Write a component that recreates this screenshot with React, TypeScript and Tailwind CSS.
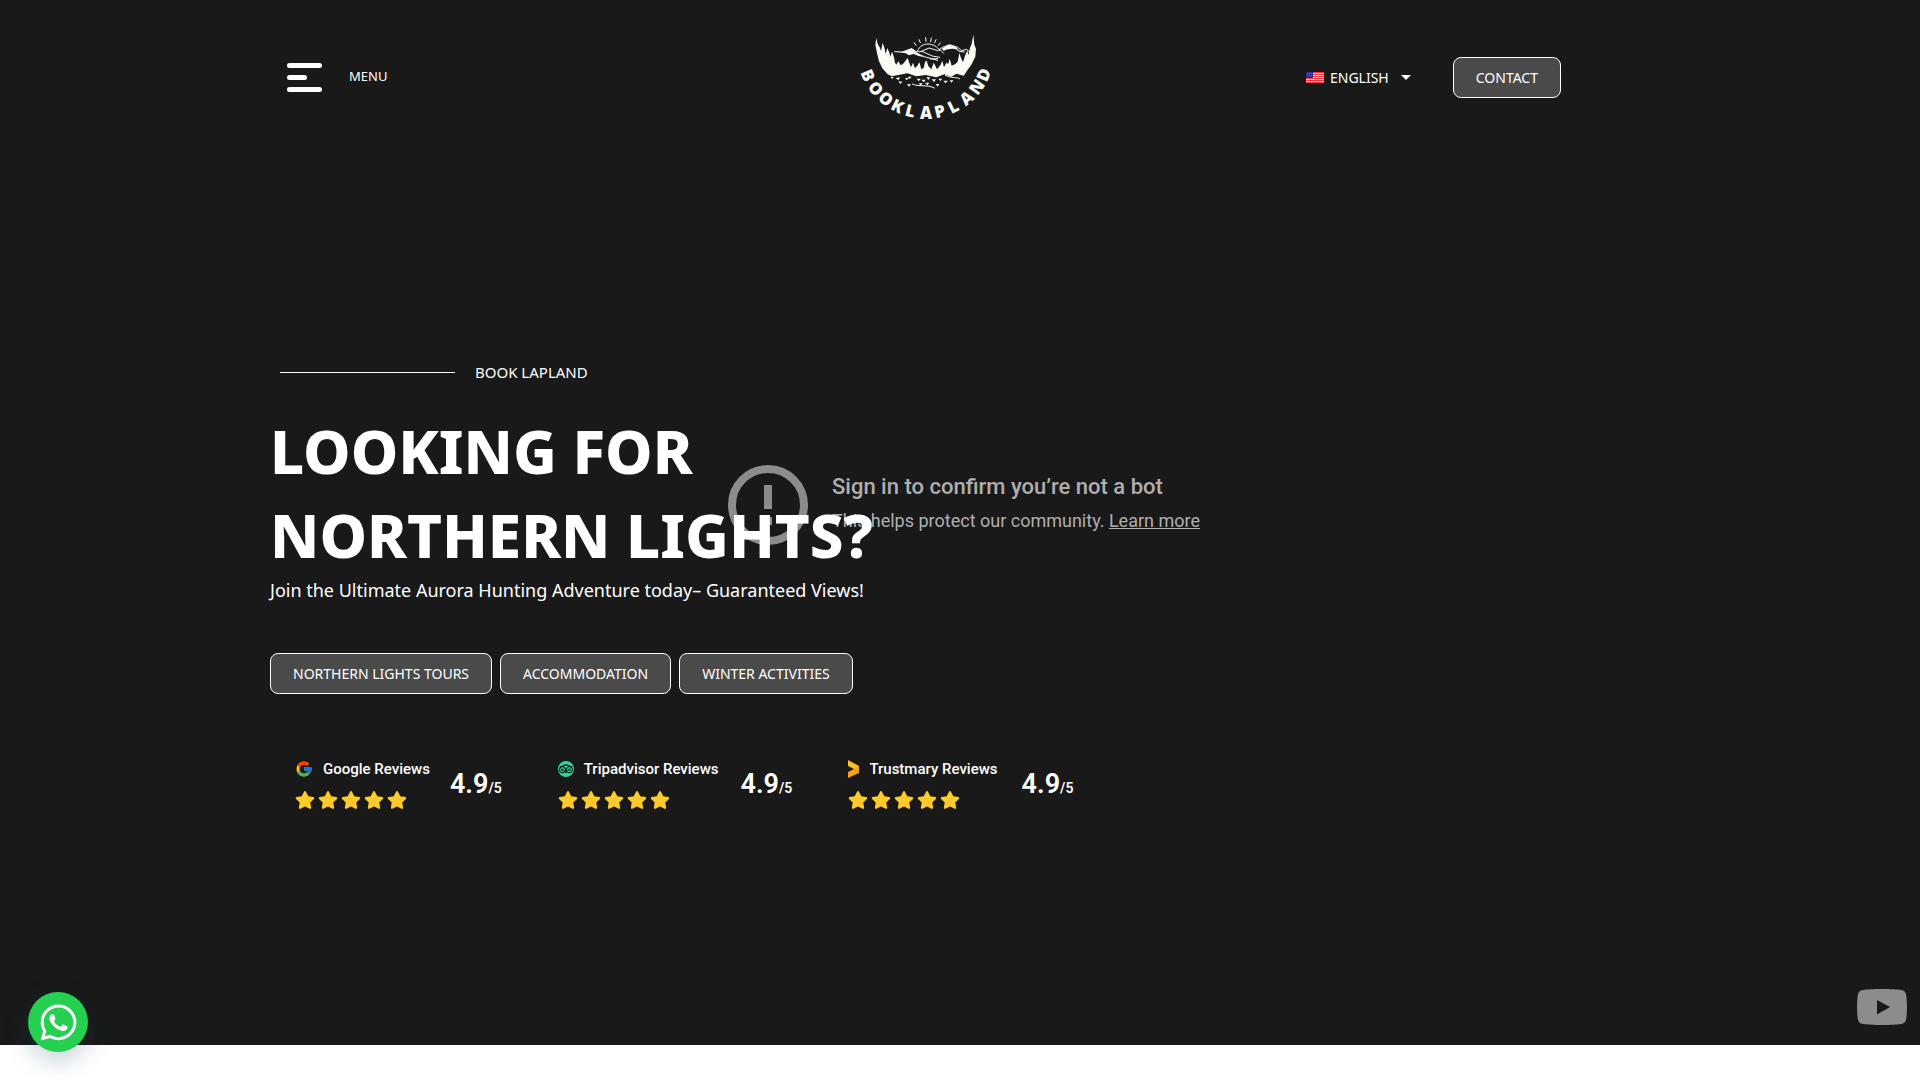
import type { ReactNode } from "react";
import { FaStar, FaTripadvisor, FaWhatsapp } from "react-icons/fa";
import { FcGoogle } from "react-icons/fc";

interface ReviewSource {
  name: string;
  score: string;
  icon: ReactNode;
  spacing: string;
}

const heroLinks = ["Northern Lights Tours", "Accommodation", "Winter Activities"];

const brandName = "BOOKLAPLAND";

// Baseline curve for the lettering under the landscape
const arc = { cx: 226, cy: 78, rx: 206, ry: 202, step: 13.4, half: 17 };

const letters = brandName.split("").map((_, i) => {
  const deg = (5 - i) * arc.step;
  const rad = (deg * Math.PI) / 180;
  return {
    x: arc.cx - arc.rx * Math.sin(rad) - arc.half * Math.cos(rad),
    y: arc.cy + arc.ry * Math.cos(rad) - arc.half * Math.sin(rad),
    deg,
  };
});

function Logo() {
  return (
    <svg
      className="overflow-visible"
      width="130"
      height="84"
      viewBox="32 29 390 252"
      role="img"
      aria-label="Book Lapland"
    >
      <g fill="none" stroke="#fafaf5" strokeWidth="3" strokeLinecap="round">
        <path d="M202 76C208 62 219 56 233 56S262 64 268 76" />
        <path d="M191 52l6 8M206 43l4 9M226 37l1 11M243 38l-2 11M257 43l-4 9M270 53l-6 7" />
        <path d="M133 79L155 80L184 70L200 80L215 78L246 92L268 96M213 78L236 68L262 76L276 66L298 58L322 66L334 76L348 72L362 82" />
        <path d="M200 84L222 94L262 105M240 101L262 100M268 72L280 84M314 66L326 78L342 80" />
        <path d="M186 176C205 186 230 176 252 188M285 150C305 160 318 154 328 160" />
      </g>
      <g fill="#fafaf5">
        <path d="M140 79L158 80L184 69L196 79L208 88L224 96L205 92L190 86L176 90L166 84Z" />
        <path d="M274 70L296 58L316 64L328 78L318 72L306 70L292 72L280 76Z" />
        <path d="M78 38L82 56L89 67L92 78L97 52L103 70L106 86L111 68L117 82L120 94L125 79L131 96L134 112L138 118L144 108L151 120L160 114L167 104L172 98L176 110L182 126L188 112L194 129L202 120L207 110L213 132L220 128L224 110L229 106L234 122L243 132L250 112L255 121L260 132L270 120L276 107L281 126L288 112L294 116L298 100L304 121L314 117L322 109L327 83L332 98L338 111L344 92L351 75L354 90L359 68L364 55L369 28L372 58L377 70L375 94L363 118L350 136L340 151L318 145L303 154L282 147L258 156L226 149L198 153L171 144L148 148L124 153L112 147L96 129L86 108L80 84L75 58Z" />
        <path d="M120 155l10 0l-4 6zM136 158l13 -2l-5 9zM144 168l12 1l-6 7zM164 158l11 0l-6 7zM172 154l12 0l-6 7zM170 177l12 0l-6 7zM199 160l12 0l-6 8zM213 163l13 0l-6 8zM205 174l12 0l-6 7zM228 156l12 0l-6 8zM224 172l13 0l-6 8zM244 162l13 0l-6 8zM256 176l11 0l-5 8zM264 160l12 0l-6 7zM279 166l13 0l-6 8zM298 165l11 0l-5 7z" />
      </g>
      <text
        x={letters.map((l) => l.x.toFixed(1)).join(" ")}
        y={letters.map((l) => l.y.toFixed(1)).join(" ")}
        rotate={letters.map((l) => l.deg.toFixed(1)).join(" ")}
        fill="#fafaf5"
        fontFamily="'Noto Sans', sans-serif"
        fontSize="50"
        fontWeight="900"
      >
        {brandName}
      </text>
    </svg>
  );
}

function UsFlag() {
  return (
    <svg width="18" height="11" viewBox="0 0 18 11" aria-hidden="true">
      <rect width="18" height="11" fill="#ffc9c9" />
      <path d="M0 .5h18M0 2.500h18M0 4.500h18M0 6.500h18M0 8.500h18M0 10.500h18" stroke="#f5333f" />
      <rect width="7" height="6" fill="#2a2a96" />
      <path d="M1 1.500h5M1 3.500h5" stroke="#6a6ac0" strokeDasharray="1 1" />
    </svg>
  );
}

function TrustmaryIcon() {
  return (
    <svg width="11" height="18" viewBox="0 0 11 18" aria-hidden="true">
      <path d="M0 0L11 6V12L6 9L0 6Z" fill="#fbc21f" />
      <path d="M11 6V13L0 18V12L6 9Z" fill="#f7a01c" />
    </svg>
  );
}

const reviews: ReviewSource[] = [
  {
    name: "Google Reviews",
    score: "4.9",
    icon: <FcGoogle className="size-[18px]" />,
    spacing: "gap-5",
  },
  {
    name: "Tripadvisor Reviews",
    score: "4.9",
    icon: (
      <span className="flex size-4 items-center justify-center rounded-full bg-[#34d399] text-[#12241d]">
        <FaTripadvisor className="size-[14px]" />
      </span>
    ),
    spacing: "gap-[22px]",
  },
  {
    name: "Trustmary Reviews",
    score: "4.9",
    icon: <TrustmaryIcon />,
    spacing: "gap-6",
  },
];

function Header() {
  return (
    <header className="relative z-10 mx-auto grid w-full max-w-[1380px] grid-cols-[1fr_auto_1fr] items-center pt-[35px] pr-[89px]">
      <button type="button" className="flex items-center gap-[27px] justify-self-start pl-[17px] text-[13px]">
        <span className="flex w-[35px] flex-col gap-[7px]">
          <span className="h-[5px] rounded-full bg-white" />
          <span className="h-[5px] w-5 rounded-full bg-white" />
          <span className="h-[5px] rounded-full bg-white" />
        </span>
        MENU
      </button>

      <a href="#home" className="pl-5">
        <Logo />
      </a>

      <div className="flex items-center gap-[42px] justify-self-end">
        <button type="button" className="flex items-center text-[14px]">
          <UsFlag />
          <span className="pl-1.5">ENGLISH</span>
          <svg className="ml-3" width="10" height="5" viewBox="0 0 10 5" aria-hidden="true">
            <path d="M0 0h10L5 5z" fill="#fff" />
          </svg>
        </button>
        <a
          href="#contact"
          className="flex h-[41px] items-center rounded-lg border border-white bg-[#4a4a4a] px-[22px] text-[14px]"
        >
          CONTACT
        </a>
      </div>
    </header>
  );
}

function VideoNotice() {
  return (
    <div className="absolute inset-0 flex items-start justify-center gap-6 pt-[465px] pl-2 font-['Roboto',sans-serif] text-[#afafaf]">
      <svg width="80" height="80" viewBox="0 0 80 80" aria-hidden="true">
        <circle cx="40" cy="40" r="36" fill="none" stroke="#8c8c8c" strokeWidth="8" />
        <path d="M36 20h8v24h-8zM36 52h8v8h-8z" fill="#8c8c8c" />
      </svg>
      <div className="pt-1.5">
        <p className="text-[22px] leading-8 font-medium">Sign in to confirm you’re not a bot</p>
        <p className="text-[18px] leading-9">
          This helps protect our community.{" "}
          <a href="#learn-more" className="underline">
            Learn more
          </a>
        </p>
      </div>
    </div>
  );
}

function Review({ review }: { review: ReviewSource }) {
  return (
    <div className={`flex items-center ${review.spacing}`}>
      <div>
        <div className="flex h-[22px] items-center gap-2.5">
          {review.icon}
          <span className="text-[15px] font-medium">{review.name}</span>
        </div>
        <div className="mt-2.5 flex gap-[3px] text-[#fdca2b]">
          {[1, 2, 3, 4, 5].map((star) => (
            <FaStar key={star} className="size-5" />
          ))}
        </div>
      </div>
      <p className="flex items-baseline font-semibold">
        <span className="text-[27px] leading-8">{review.score}</span>
        <span className="text-[14px]">/5</span>
      </p>
    </div>
  );
}

export default function App() {
  return (
    <div className="bg-white font-['Noto_Sans',sans-serif] text-white">
      <section className="relative bg-[#191919]">
        <VideoNotice />
        <Header />

        {/* Hero */}
        <main className="pointer-events-none relative mx-auto w-full max-w-[1380px] pt-[241px] pb-[235px]">
          <div className="flex items-center gap-5 pl-2.5">
            <span className="h-px w-[175px] bg-white" />
            <p className="text-[15px] leading-6">BOOK LAPLAND</p>
          </div>

          <h1 className="mt-[25px] text-[60px] leading-[84px] font-extrabold">
            LOOKING FOR
            <br />
            NORTHERN LIGHTS?
          </h1>
          <p className="mt-px text-[18px] leading-6">
            Join the Ultimate Aurora Hunting Adventure today– Guaranteed Views!
          </p>

          <div className="pointer-events-auto mt-[51px] flex flex-wrap gap-2">
            {heroLinks.map((link) => (
              <a
                key={link}
                href="#tours"
                className="flex h-[41px] items-center rounded-lg border border-white bg-[#4a4a4a] px-[22px] text-[14px] uppercase"
              >
                {link}
              </a>
            ))}
          </div>

          {/* Reviews */}
          <div className="mt-16 flex flex-wrap gap-14 pl-[25px] font-['Roboto',sans-serif]">
            {reviews.map((review) => (
              <Review key={review.name} review={review} />
            ))}
          </div>
        </main>

        <a href="#youtube" aria-label="Watch on YouTube" className="absolute right-[13px] bottom-5">
          <svg width="50" height="36" viewBox="0 0 50 36">
            <path
              d="M25 0C34 0 40 .4 44 1C47 1.500 48.800 3 49.200 6C50.200 13 50.200 23 49.200 30C48.800 33 47 34.500 44 35C40 35.600 34 36 25 36S10 35.600 6 35C3 34.500 1.200 33 .8 30C-.2 23-.2 13 .8 6C1.200 3 3 1.500 6 1C10 .4 16 0 25 0Z"
              fill="#8c8c8c"
            />
            <path d="M20 11L33 18L20 25.500Z" fill="#191919" />
          </svg>
        </a>
      </section>

      {/* Page body starts below the hero */}
      <div className="h-[35px]" />

      <a
        href="#whatsapp"
        aria-label="Chat on WhatsApp"
        className="fixed bottom-7 left-7 flex size-[60px] items-center justify-center rounded-full bg-[#25d051] shadow-[0_8px_24px_rgba(20,80,90,0.25)]"
      >
        <FaWhatsapp className="size-[41px]" />
      </a>
    </div>
  );
}
